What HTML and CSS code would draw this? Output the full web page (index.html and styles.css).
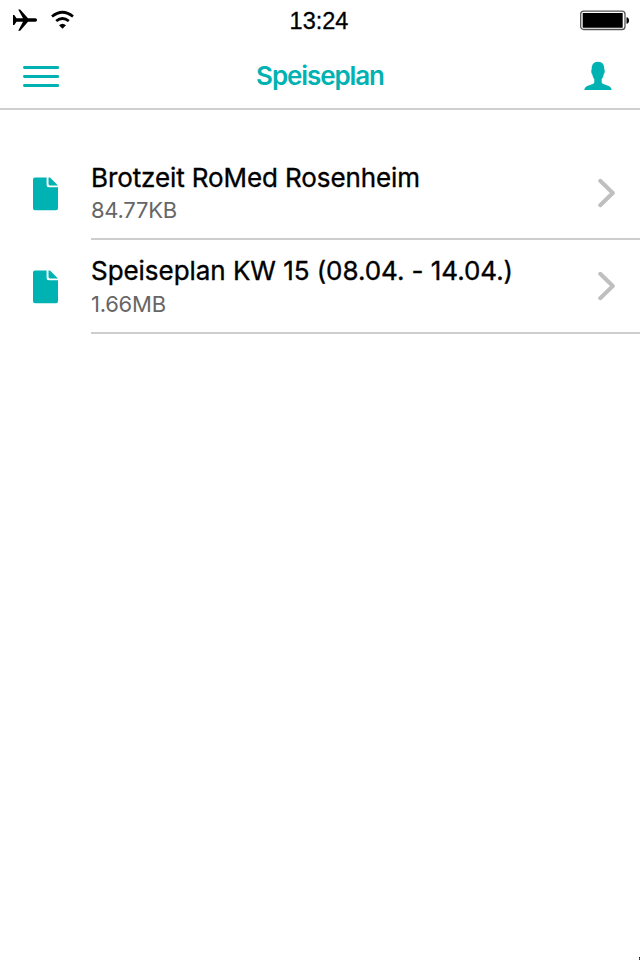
FILE: index.html
```html
<!DOCTYPE html>
<html lang="de">
<head>
<meta charset="utf-8">
<title>Speiseplan</title>
<link rel="stylesheet" href="styles.css">
</head>
<body>
<div class="status">
  <svg class="signals" width="80" height="40" viewBox="0 0 80 40">
    <path d="M13 15h1.300l2.200 3.200h6.500l-4.800-8.700h2l7.800 8.700h7.200q1.900 0 1.900 1.800t-1.900 1.800h-7.200l-7.800 9h-2l4.800-9h-6.500l-2.200 3.200h-1.300z"/>
    <path class="wave" d="M52 16.500Q62.500 8.100 73 16.500M56.200 21Q62.500 16.100 68.800 21"/>
    <path d="M59 25.300Q62.500 22.300 66 25.300L62.500 28.700z"/>
  </svg>
  <span class="time">13:24</span>
  <svg class="battery" width="60" height="40" viewBox="0 0 60 40">
    <rect x="0.700" y="11.200" width="44.300" height="18.300" rx="3" fill="#fff" stroke="#555" stroke-width="1.300"/>
    <rect x="2.700" y="13" width="40" height="14.700" rx="0.500"/>
    <path d="M46.500 17.200q2.500.3 2.500 3.300t-2.500 3.300z"/>
  </svg>
</div>
<header class="navbar">
  <svg class="menu" width="36" height="24" viewBox="0 0 36 24">
    <path d="M1.400 3.500H34.700M1.400 12.500H34.700M1.400 21.500H34.700"/>
  </svg>
  <h1 class="title">Speiseplan</h1>
  <svg class="user" width="28" height="30" viewBox="0 0 28 30">
    <path d="M14 .7C9.500 .7 7.500 3.500 7.700 8.500C6.900 9 7.200 12.600 8.300 13.300C8.700 15.800 9.400 17 10.300 18V21.300C10.300 24.500 .8 23.200 .3 29H27.700C27.200 23.200 17.700 24.500 17.700 21.300V18C18.600 17 19.300 15.800 19.700 13.300C20.800 12.600 21.100 9 20.300 8.500C20.500 3.500 18.500 .7 14 .7z"/>
  </svg>
</header>
<main class="list">
  <div class="row first">
    <svg class="doc" width="26" height="34" viewBox="0 0 26 34">
      <path d="M2 .5H13.600V8Q13.600 10.300 16 10.300H25V31.300Q25 33.300 23 33.300H2Q0 33.300 0 31.300V2.500Q0 .5 2 .5zM15.500 .5H17L25 8.400H17Q15.500 8.400 15.500 7z"/>
    </svg>
    <div class="body">
      <div class="text">
        <div class="name"><span class="n1">Brotzeit RoMed Rosenheim</span></div>
        <div class="size">84.77KB</div>
      </div>
      <svg class="chevron" width="18" height="30" viewBox="0 0 18 30"><path d="M2.200 2.800L14.800 15L2.200 27.200"/></svg>
    </div>
  </div>
  <div class="row second">
    <svg class="doc" width="26" height="34" viewBox="0 0 26 34">
      <path d="M2 .5H13.600V8Q13.600 10.300 16 10.300H25V31.300Q25 33.300 23 33.300H2Q0 33.300 0 31.300V2.500Q0 .5 2 .5zM15.500 .5H17L25 8.400H17Q15.500 8.400 15.500 7z"/>
    </svg>
    <div class="body">
      <div class="text">
        <div class="name"><span class="n2">Speiseplan KW 15 (08.04. - 14.04.)</span></div>
        <div class="size">1.66MB</div>
      </div>
      <svg class="chevron" width="18" height="30" viewBox="0 0 18 30"><path d="M2.200 2.800L14.800 15L2.200 27.200"/></svg>
    </div>
  </div>
</main>
<div class="corner"></div>
</body>
</html>
```
FILE: styles.css
```css
* { box-sizing: border-box; }
body {
  margin: 0;
  height: 960px;
  overflow: hidden;
  background: #fff;
  color: #000;
  font-family: Inter, "Liberation Sans", sans-serif;
}
svg { display: block; flex: none; }
.status {
  height: 40px;
  display: grid;
  grid-template-columns: 80px 1fr 60px;
}
.wave { fill: none; stroke: #000; stroke-width: 2.800; }
.time {
  font-family: "Liberation Sans", sans-serif;
  font-size: 23.500px;
  line-height: 42px;
  letter-spacing: 0;
  text-align: center;
  padding-right: 22px;
  -webkit-text-stroke: 0.300px #000;
}
.navbar {
  height: 70px;
  border-bottom: 2px solid #d0d0d0;
  display: grid;
  grid-template-columns: 36px 1fr 28px;
  padding: 0 28px 0 23px;
}
.menu { margin-top: 24px; }
.menu path { stroke: #00b2b2; stroke-width: 2.800; stroke-linecap: round; }
.user { margin-top: 21px; fill: #00b2b2; }
.title {
  margin: 0;
  color: #00b2b2;
  font-size: 26px;
  font-weight: 600;
  line-height: 72px;
  letter-spacing: -1.100px;
  text-align: center;
  padding-right: 3px;
}
.list { padding-top: 36px; }
.row { display: flex; padding-left: 33px; }
.first { height: 94px; }
.second { height: 94px; }
.doc { margin-top: 31px; fill: #00b2b2; }
.second .doc { margin-top: 30px; }
.body {
  flex: 1;
  margin-left: 32px;
  border-bottom: 2px solid #cdcdcf;
  display: flex;
  justify-content: space-between;
}
.text { padding-top: 16px; white-space: nowrap; }
.second .text { padding-top: 15px; }
.name { font-size: 26px; line-height: 32px; font-weight: 400; -webkit-text-stroke: 0.350px #000; }
.n1 { letter-spacing: -0.100px; }
.n2 { letter-spacing: -0.050px; }
.size { font-size: 22px; line-height: 34px; letter-spacing: -0.250px; color: #666; }
.first .size { line-height: 32px; }
.chevron { margin: 32px 24px 0 0; }
.second .chevron { margin-top: 31px; }
.chevron path { fill: none; stroke: #bfbfbf; stroke-width: 4; stroke-linecap: round; stroke-linejoin: round; }
.corner {
  position: absolute;
  right: 0;
  bottom: 0;
  width: 1px;
  height: 3px;
  background: linear-gradient(#00008b 0 1px, #008b00 1px 2px, #c00000 2px 3px);
}
```
